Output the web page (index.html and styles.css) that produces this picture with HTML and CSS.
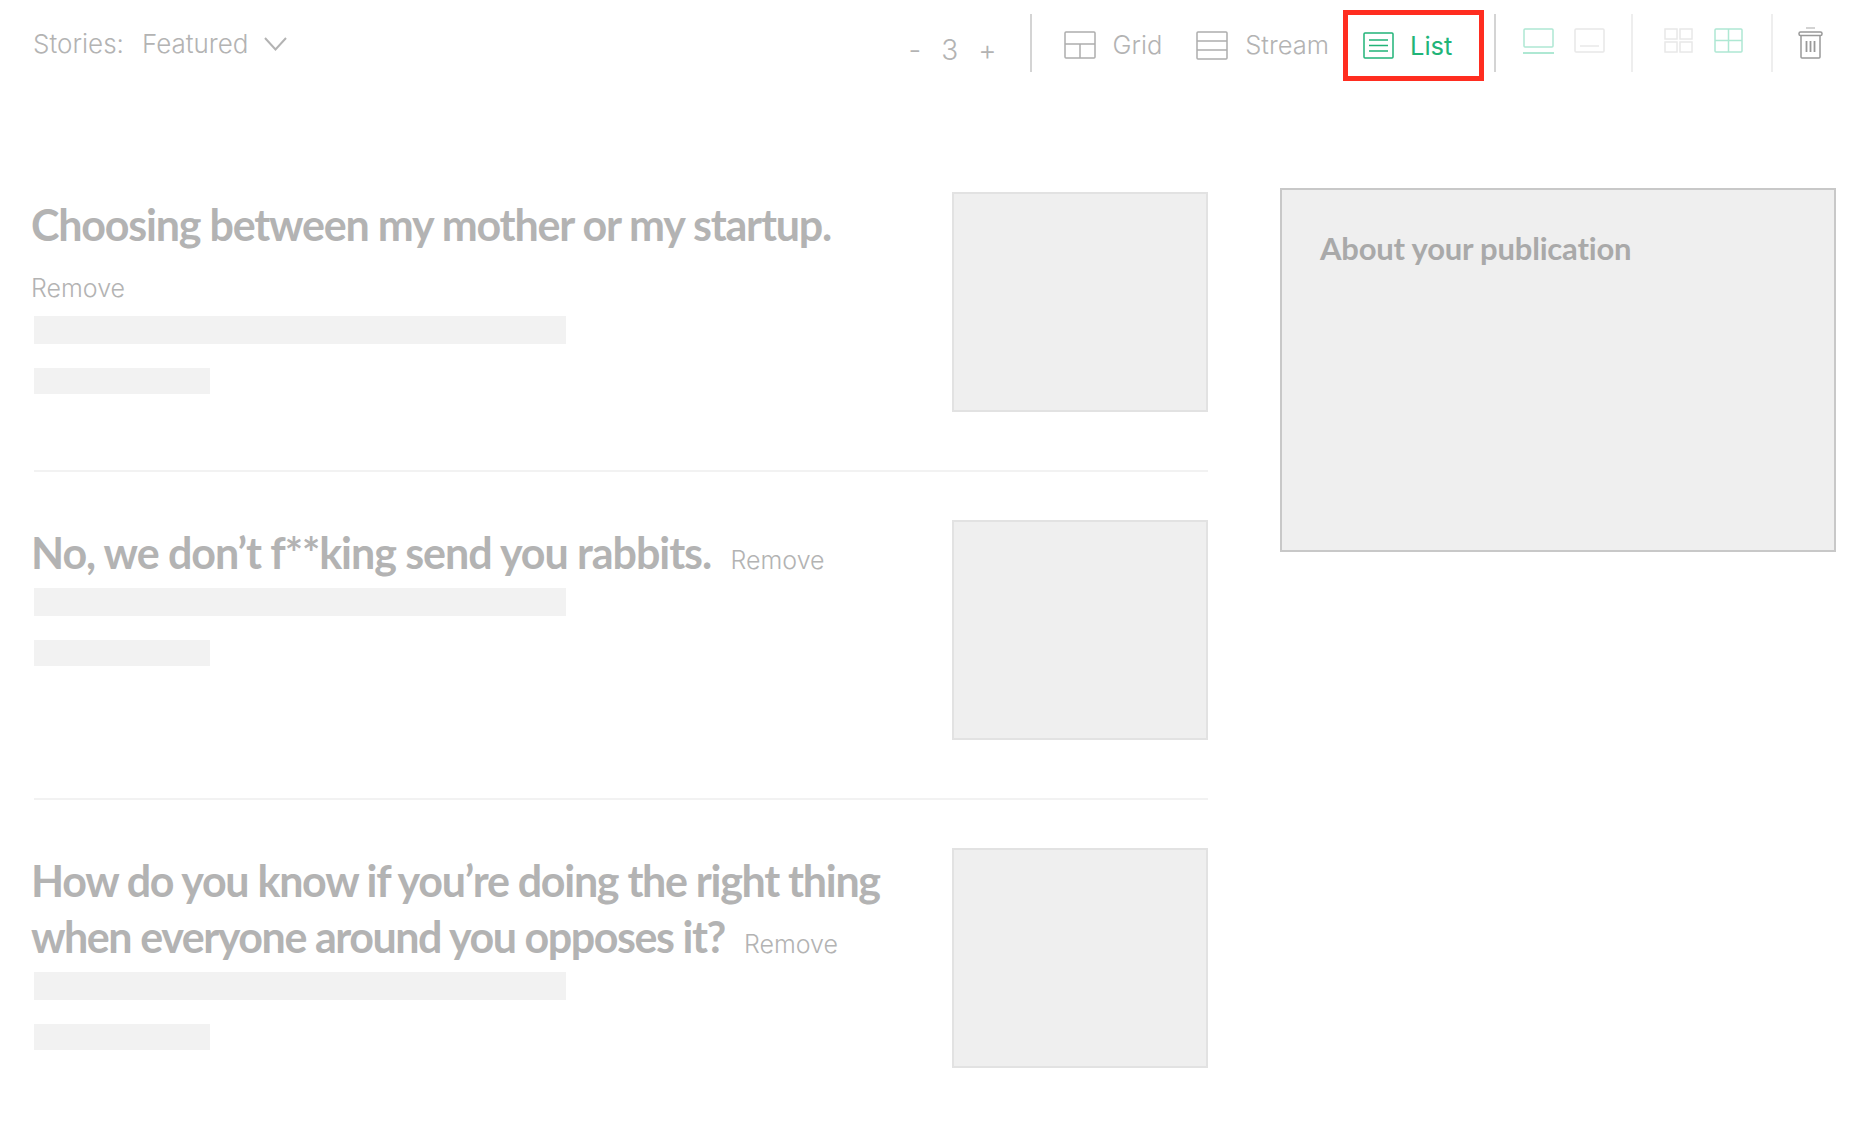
FILE: index.html
```html
<!DOCTYPE html>
<html lang="en">
<head>
    <meta charset="UTF-8">
    <title>Stories: Featured</title>
    <link rel="stylesheet" href="styles.css">
</head>
<body>

  <div class="toolbar">
    <div class="picker">
      <span class="tool-text">Stories:</span>
      <span class="tool-text picker-value">Featured</span>
      <svg class="chevron" width="23" height="14" viewBox="0 0 23 14"><path d="M1 1l10.500 11.500L22 1" fill="none" stroke="#b3b3b3" stroke-width="2"/></svg>
    </div>

    <div class="tools">
      <div class="stepper">
        <span class="tool-text">-</span>
        <span class="tool-text">3</span>
        <span class="tool-text">+</span>
      </div>
      <div class="divider"></div>

      <div class="tool tool-grid">
        <svg width="32" height="28" viewBox="0 0 32 28" fill="none" stroke="#adadad" stroke-width="1.500"><rect x="1" y="1" width="30" height="26" rx="1"/><path d="M1 13h30M16 13v14"/></svg>
        <span class="tool-text">Grid</span>
      </div>
      <div class="tool tool-stream">
        <svg width="32" height="29" viewBox="0 0 32 29" fill="none" stroke="#adadad" stroke-width="1.500"><rect x="1" y="1" width="30" height="27" rx="1"/><path d="M1 10h30M1 19h30"/></svg>
        <span class="tool-text">Stream</span>
      </div>
      <div class="tool tool-list">
        <svg width="31" height="27" viewBox="0 0 31 27" fill="none" stroke="#21b478" stroke-width="1.500"><rect x="1" y="1" width="29" height="25" rx="1"/><path d="M6 8h19M6 13.500h19M6 19h19"/></svg>
        <span class="tool-text tool-active">List</span>
      </div>
      <div class="divider divider-after-list"></div>

      <svg class="icon-a" width="31" height="26" viewBox="0 0 31 26" fill="none" stroke="#aee8d3" stroke-width="1.500"><rect x="1" y="1" width="29" height="18" rx="1"/><path d="M0 25h31" stroke-width="2"/></svg>
      <svg class="icon-b" width="31" height="25" viewBox="0 0 31 25" fill="none" stroke="#e8e8e8" stroke-width="1.500"><rect x="1" y="1" width="29" height="23" rx="1"/><path d="M6 18h19"/></svg>
      <div class="divider divider-light divider-c"></div>

      <svg class="icon-c" width="29" height="25" viewBox="0 0 29 25" fill="none" stroke="#e8e8e8" stroke-width="1.500"><rect x="1" y="1" width="12" height="10"/><rect x="16" y="1" width="12" height="10"/><rect x="1" y="14" width="12" height="10"/><rect x="16" y="14" width="12" height="10"/></svg>
      <svg class="icon-d" width="29" height="25" viewBox="0 0 29 25" fill="none" stroke="#aee8d3" stroke-width="1.500"><rect x="1" y="1" width="27" height="23" rx="1"/><path d="M1 12.500h27M14.500 1v23"/></svg>
      <div class="divider divider-light divider-e"></div>

      <svg class="icon-trash" width="25" height="32" viewBox="0 0 25 32" fill="none" stroke="#999999" stroke-width="1.500"><path d="M8 1h9" stroke="#c4c4c4"/><rect x="1" y="5" width="23" height="3.500" rx="1.500"/><path d="M3 8.500V30a1 1 0 0 0 1 1h17a1 1 0 0 0 1-1V8.500"/><path d="M8.500 14v11M12.500 14v11M16.500 14v11" stroke-width="1.800"/></svg>
    </div>
  </div>

  <div class="main">
    <div class="stories">
      <div class="story">
        <div class="story-body">
          <div class="story-title">Choosing between my mother or my startup.</div>
          <div class="remove remove-block">Remove</div>
          <div class="bar"></div>
          <div class="bar bar-short"></div>
        </div>
        <div class="thumb"></div>
      </div>

      <div class="story">
        <div class="story-body">
          <div class="story-title title-loose">No, we don’t f**king send you rabbits. <span class="remove">Remove</span></div>
          <div class="bar"></div>
          <div class="bar bar-short"></div>
        </div>
        <div class="thumb"></div>
      </div>

      <div class="story story-last">
        <div class="story-body">
          <div class="story-title title-tight">How do you know if you’re doing the right thing<br><span class="title-line">when everyone around you opposes it?</span> <span class="remove">Remove</span></div>
          <div class="bar"></div>
          <div class="bar bar-short"></div>
        </div>
        <div class="thumb"></div>
      </div>
    </div>

    <div class="about">
      <div class="about-title">About your publication</div>
    </div>
  </div>

</body>
</html>
```

FILE: styles.css
```css
body {
    font-family: "Inter", "Liberation Sans", sans-serif;
    background-color: #ffffff;
    margin: 0;
    padding: 0;
}

.toolbar {
    display: flex;
    justify-content: space-between;
    height: 88px;
}

.tool-text {
    color: #b3b3b3;
    font-size: 25.500px;
    font-weight: 300;
    line-height: 30px;
}

.tool-active {
    color: #21b478;
    font-weight: 400;
}

.picker {
    display: flex;
    align-items: center;
    padding: 29px 0 0 33px;
    height: 30px;
}

.picker .tool-text {
    font-size: 26px;
}

.picker-value {
    margin-left: 18px;
}

.chevron {
    margin-left: 16px;
}

.tools {
    display: flex;
    align-items: flex-start;
    padding-right: 51px;
}

.stepper {
    display: flex;
    gap: 20px;
    padding-top: 35px;
}

.stepper .tool-text {
    font-size: 28px;
}

.divider {
    width: 2px;
    height: 58px;
    margin-top: 14px;
    margin-left: 33px;
    background-color: #d4d4d4;
}

.divider-light {
    background-color: #eeeeee;
}

.tool {
    display: flex;
    align-items: center;
    gap: 17px;
    height: 30px;
    padding-top: 30px;
}

.tool-grid {
    margin-left: 32px;
}

.tool-stream {
    margin-left: 34px;
}

.tool-list {
    box-sizing: border-box;
    width: 141px;
    height: 71px;
    margin-top: 10px;
    margin-left: 14px;
    padding: 0 0 0 15px;
    gap: 16px;
    border: 5px solid #ff2d20;
}

.divider-after-list {
    margin-left: 10px;
}

.icon-a {
    margin: 28px 0 0 27px;
}

.icon-b {
    margin: 28px 0 0 20px;
}

.divider-c {
    margin-left: 26px;
}

.icon-c {
    margin: 28px 0 0 31px;
}

.icon-d {
    margin: 28px 0 0 21px;
}

.divider-e {
    margin-left: 28px;
}

.icon-trash {
    margin: 27px 0 0 25px;
}

.main {
    display: flex;
    align-items: flex-start;
    padding: 100px 0 0 34px;
}

.stories {
    width: 1174px;
    padding-top: 4px;
}

.story {
    display: flex;
    justify-content: space-between;
    padding: 48px 0 58px 0;
    border-bottom: 2px solid #f2f2f2;
}

.story:first-child {
    padding-top: 0;
}

.story-last {
    border-bottom: none;
}

.story-body {
    padding-top: 5px;
}

.story-title {
    margin-left: -3px;
    margin-bottom: 0;
    color: #b3b3b3;
    font-family: "Lato", sans-serif;
    font-size: 43px;
    font-weight: 700;
    line-height: 56px;
    letter-spacing: -1.200px;
    white-space: nowrap;
}

.title-loose {
    letter-spacing: -1.050px;
}

.title-tight {
    letter-spacing: -1.300px;
}

.title-line {
    letter-spacing: -1.450px;
}

.remove {
    color: #b3b3b3;
    font-family: "Inter", sans-serif;
    font-size: 25px;
    font-weight: 300;
    letter-spacing: 0;
    margin-left: 10px;
}

.remove-block {
    margin: 19px 0 12px -3px;
    line-height: 32px;
}

.bar {
    width: 532px;
    height: 28px;
    margin-bottom: 24px;
    background-color: #f2f2f2;
}

.bar-short {
    width: 176px;
    height: 26px;
    margin-bottom: 0;
}

.thumb {
    box-sizing: border-box;
    width: 256px;
    height: 220px;
    background-color: #efefef;
    border: 2px solid #e2e2e2;
}

.about {
    box-sizing: border-box;
    width: 556px;
    height: 364px;
    margin-left: 72px;
    padding: 38px 38px;
    background-color: #efefef;
    border: 2px solid #c8c8c8;
}

.about-title {
    color: #a9a9a9;
    font-family: "Lato", sans-serif;
    font-size: 31px;
    font-weight: 700;
    line-height: 40px;
    letter-spacing: -0.200px;
}
```
